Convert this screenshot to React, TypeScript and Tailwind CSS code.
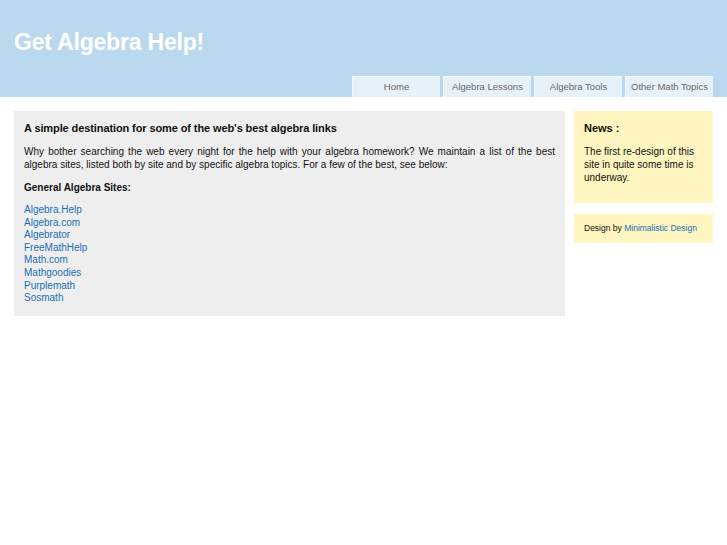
const tabs = ["Home", "Algebra Lessons", "Algebra Tools", "Other Math Topics"];

const links = [
  "Algebra.Help",
  "Algebra.com",
  "Algebrator",
  "FreeMathHelp",
  "Math.com",
  "Mathgoodies",
  "Purplemath",
  "Sosmath",
];

export default function App() {
  return (
    <div className="min-h-[545px] bg-white font-['Liberation_Sans',Arial,sans-serif] text-[10px] text-[#111]">
      <header className="h-[97px] bg-[#bad9ee] flex flex-col">
        <h1 className="pl-[14px] pt-[29px] text-[23px] leading-[26px] font-bold text-white tracking-[-0.2px]">
          Get Algebra Help!
        </h1>
        <nav className="mt-auto flex justify-end gap-[3px] pr-[14px]">
          {tabs.map((t) => (
            <a
              key={t}
              href="#"
              className="w-[88px] h-[21px] flex items-center justify-center bg-[#e6f1f9] border-t border-l border-[#f2f8fc] text-[#666] text-[9.5px]"
            >
              {t}
            </a>
          ))}
        </nav>
      </header>

      <div className="flex gap-[9px] px-[14px] pt-[14px]">
        <main className="flex-1 bg-[#eeeeee] px-[10px] pt-[10px] pb-[11px]">
          <h2 className="text-[11px] font-bold leading-[14px] tracking-[-0.1px]">
            A simple destination for some of the web's best algebra links
          </h2>
          <p className="mt-[10px] leading-[13px] text-justify">
            Why bother searching the web every night for the help with your algebra homework? We maintain a list of the best algebra sites, listed both by site and by specific algebra topics. For a few of the best, see below:
          </p>
          <p className="mt-[10px] font-bold leading-[13px]">General Algebra Sites:</p>
          <ul className="mt-[10px] leading-[12.6px]">
            {links.map((l) => (
              <li key={l}>
                <a href="#" className="text-[#1a6fb5]">
                  {l}
                </a>
              </li>
            ))}
          </ul>
        </main>

        <aside className="w-[139px] flex flex-col gap-[11px]">
          <div className="h-[92px] bg-[#fff5c0] px-[10px] pt-[10px]">
            <h3 className="text-[11px] font-bold leading-[14px]">News :</h3>
            <p className="mt-[10px] leading-[13px]">
              The first re-design of this site in quite some time is underway.
            </p>
          </div>
          <div className="h-[29px] bg-[#fff5c0] px-[10px] flex items-center text-[8.5px] whitespace-nowrap">
            <span>
              Design by{" "}
              <a href="#" className="text-[#1a6fb5]">
                Minimalistic Design
              </a>
            </span>
          </div>
        </aside>
      </div>
    </div>
  );
}
